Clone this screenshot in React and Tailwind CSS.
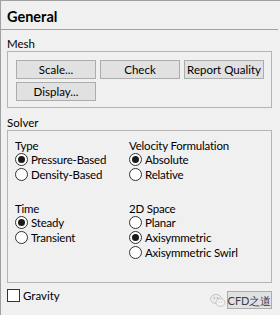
import React from "react";

const font = { fontFamily: 'Lato, "Noto Sans", sans-serif' };

function Btn({ children, className = "" }) {
  return (
    <div
      className={
        "h-[19px] w-[80px] flex items-center justify-center whitespace-nowrap bg-[#e1e1e1] border border-[#adadad] text-[11.5px] text-black leading-none " +
        className
      }
    >
      {children}
    </div>
  );
}

function Radio({ checked, label }) {
  return (
    <div className="flex items-center h-[15px] gap-[3px] whitespace-nowrap">
      <div className="w-[13px] h-[13px] shrink-0 rounded-full border border-[#333333] bg-white flex items-center justify-center">
        {checked && <div className="w-[7px] h-[7px] rounded-full bg-[#1a1a1a]" />}
      </div>
      <span className="text-[11.5px] leading-none text-black tracking-[-0.2px]">{label}</span>
    </div>
  );
}

function Label({ children, className = "" }) {
  return (
    <div className={"text-[11.5px] leading-none h-[12px] whitespace-nowrap tracking-[-0.2px] " + className}>
      {children}
    </div>
  );
}

export default function App() {
  return (
    <div
      className="w-[280px] h-[315px] bg-[#f0f0f0] border-l border-t border-[#a0a0a0] flex flex-col text-black overflow-hidden"
      style={font}
    >
      <div className="h-[29px] shrink-0 border-b border-[#a0a0a0] mr-[2px] flex items-center pl-[6px] pt-[5px]">
        <span className="text-[14.5px] font-bold leading-none">General</span>
      </div>
      <div className="pl-[6px] pr-[8px] flex flex-col">
        <div className="text-[11.5px] leading-none mt-[8px] h-[13px]">Mesh</div>
        <div className="border border-[#b4b4b4] h-[57px] pl-[8px] pt-[8px] flex flex-col gap-[3px]">
          <div className="flex gap-[4px]">
            <Btn>Scale...</Btn>
            <Btn>Check</Btn>
            <Btn>Report Quality</Btn>
          </div>
          <div className="flex">
            <Btn>Display...</Btn>
          </div>
        </div>
        <div className="text-[11.5px] leading-none mt-[9px] h-[13px]">Solver</div>
        <div className="border border-[#b4b4b4] h-[153px] pl-[7px] pt-[9px] grid grid-cols-[114px_1fr]">
          <div className="flex flex-col">
            <Label>Type</Label>
            <Radio checked label="Pressure-Based" />
            <Radio label="Density-Based" />
            <Label className="mt-[21px]">Time</Label>
            <Radio checked label="Steady" />
            <Radio label="Transient" />
          </div>
          <div className="flex flex-col">
            <Label>Velocity Formulation</Label>
            <Radio checked label="Absolute" />
            <Radio label="Relative" />
            <Label className="mt-[21px]">2D Space</Label>
            <Radio label="Planar" />
            <Radio checked label="Axisymmetric" />
            <Radio label="Axisymmetric Swirl" />
          </div>
        </div>
        <div className="flex items-start justify-between mt-[6px]">
          <div className="flex items-center gap-[3px] h-[13px]">
            <div className="w-[13px] h-[13px] border border-[#333333] bg-white" />
            <span className="text-[11.5px] leading-none">Gravity</span>
          </div>
          <div className="flex items-center gap-[1px] mt-[2px]">
            <svg width="16" height="15" viewBox="0 0 16 15">
              <ellipse cx="6" cy="6" rx="5.5" ry="4.5" fill="#ececec" stroke="#c4c4c4" />
              <ellipse cx="10.5" cy="9.5" rx="4.5" ry="3.8" fill="#f6f6f6" stroke="#c4c4c4" />
              <circle cx="4.3" cy="5" r="0.8" fill="#999" />
              <circle cx="7.6" cy="5" r="0.8" fill="#999" />
              <circle cx="9.2" cy="9" r="0.6" fill="#aaa" />
              <circle cx="11.8" cy="9" r="0.6" fill="#aaa" />
            </svg>
            <div className="h-[18px] w-[45px] flex items-center justify-center bg-[#e1e1e1] border border-[#adadad] text-[11px] text-[#3a3a4a] leading-none whitespace-nowrap">
              CFD之道
            </div>
          </div>
        </div>
      </div>
    </div>
  );
}
